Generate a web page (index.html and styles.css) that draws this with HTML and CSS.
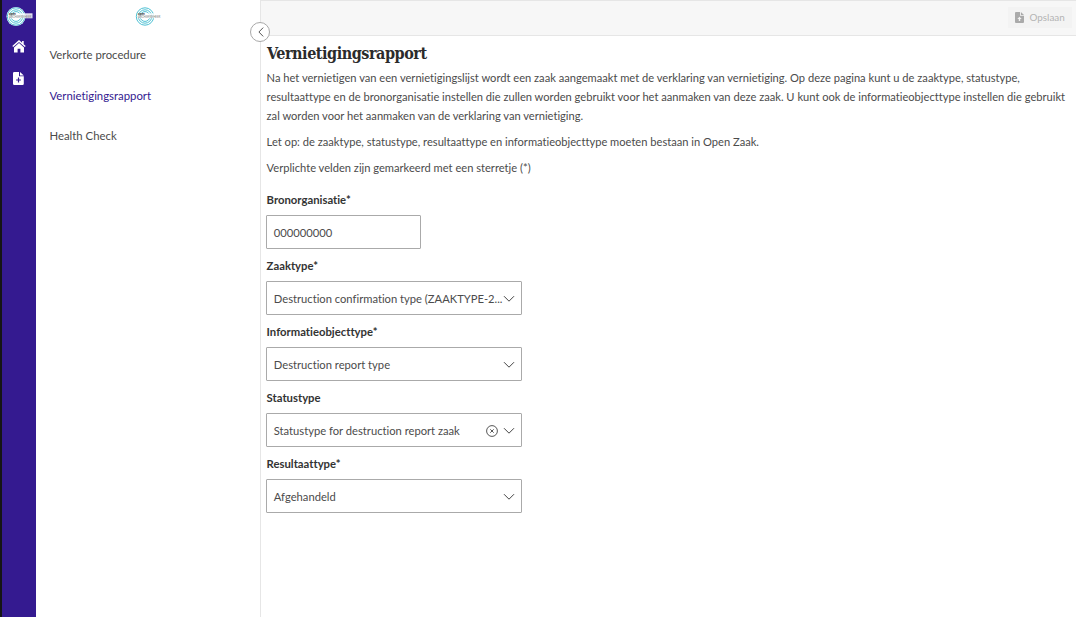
FILE: index.html
```html
<!DOCTYPE html>
<html lang="nl">
<head>
<meta charset="utf-8">
<title>Vernietigingsrapport</title>
<link rel="stylesheet" href="styles.css">
</head>
<body>
<svg class="defs" width="0" height="0">
  <symbol id="rings" viewBox="0 0 27 19">
    <circle class="logo-disc" cx="10" cy="9.5" r="9.5"/>
    <g class="logo-rings"><circle cx="10" cy="9.5" r="8.7"/><circle cx="10" cy="9.5" r="6.7"/><circle cx="10" cy="9.5" r="4.9"/></g>
    <rect class="logo-band" x="3" y="6.3" width="23.5" height="5"/>
  </symbol>
  <symbol id="chevron" viewBox="0 0 12 8"><path d="M1 1.2 6 6.2 11 1.2"/></symbol>
</svg>
<div class="app">
  <nav class="rail">
    <svg class="logo" viewBox="0 0 27 19"><use href="#rings" width="27" height="19"/><text class="logo-open" x="3" y="7.8">open</text><text class="logo-name" x="3" y="11" textLength="22.5">ARCHIEFBEHEER</text></svg>
    <svg class="rail-icon home" viewBox="0 0 14 13"><path d="M7 0 .3 6l.9 1L7 1.9 12.8 7l.9-1L11.7 4.2V1h-1.6v1.7z"/><path d="M7 3.1 2 7.5v5h3.6V8.7h2.8v3.8H12v-5z"/></svg>
    <svg class="rail-icon file" viewBox="0 0 11 13"><path fill-rule="evenodd" d="M1.3 0H6v4.3h4.8v7.5a1.2 1.2 0 0 1-1.2 1.2H1.3A1.3 1.3 0 0 1 0 11.7V1.3A1.3 1.3 0 0 1 1.3 0zM4.9 5.6v1.8H3.1v1.2h1.8v1.8h1.2V8.6h1.8V7.4H6.1V5.6zM7 0l3.8 3.4H7z"/></svg>
  </nav>
  <aside class="sidebar">
    <svg class="logo" viewBox="0 0 27 19"><use href="#rings" width="27" height="19"/><text class="logo-open" x="3" y="7.8">open</text><text class="logo-name" x="3" y="11" textLength="22.5">ARCHIEFBEHEER</text></svg>
    <div class="links"><a>Verkorte procedure</a><a class="active">Vernietigingsrapport</a><a>Health Check</a></div>
    <button class="collapse"><svg viewBox="0 0 6 10"><path d="M5.2.6.9 5l4.3 4.4"/></svg></button>
  </aside>
  <main class="main">
    <header class="toolbar">
      <button class="save"><svg viewBox="0 0 9 11"><path fill-rule="evenodd" d="M1 0h4v3.7h4V10a1 1 0 0 1-1 1H1a1 1 0 0 1-1-1V1a1 1 0 0 1 1-1zM4.5 4.7 2.3 7h1.5v2h1.4V7h1.5zM5.9 0 9 2.9H5.9z"/></svg><span>Opslaan</span></button>
    </header>
    <div class="content">
      <h1>Vernietigingsrapport</h1>
      <p>Na het vernietigen van een vernietigingslijst wordt een zaak aangemaakt met de verklaring van vernietiging. Op deze pagina kunt u de zaaktype, statustype,<br>resultaattype en de bronorganisatie instellen die zullen worden gebruikt voor het aanmaken van deze zaak. U kunt ook de informatieobjecttype instellen die gebruikt<br>zal worden voor het aanmaken van de verklaring van vernietiging.</p>
      <p>Let op: de zaaktype, statustype, resultaattype en informatieobjecttype moeten bestaan in Open Zaak.</p>
      <p>Verplichte velden zijn gemarkeerd met een sterretje (*)</p>
      <form class="form">
        <label>Bronorganisatie*</label>
        <div class="field short"><span>000000000</span></div>
        <label>Zaaktype*</label>
        <div class="field"><span>Destruction confirmation type (ZAAKTYPE-2...</span><svg class="chevron"><use href="#chevron"/></svg></div>
        <label>Informatieobjecttype*</label>
        <div class="field"><span>Destruction report type</span><svg class="chevron"><use href="#chevron"/></svg></div>
        <label>Statustype</label>
        <div class="field"><span>Statustype for destruction report zaak</span><svg class="clear" viewBox="0 0 12 12"><circle cx="6" cy="6" r="5.4"/><path d="m4.3 4.3 3.4 3.4m0-3.4L4.3 7.7"/></svg><svg class="chevron"><use href="#chevron"/></svg></div>
        <label>Resultaattype*</label>
        <div class="field"><span>Afgehandeld</span><svg class="chevron"><use href="#chevron"/></svg></div>
      </form>
    </div>
  </main>
</div>
</body>
</html>
```
FILE: styles.css
```css
* { box-sizing: border-box; }
body { margin: 0; font: 11.3px/19px Lato, sans-serif; font-variant-ligatures: none; color: #4b4b4b; background: #fff; }
svg { display: block; flex: none; }
button { font: inherit; }
.defs { position: absolute; }
.app { display: flex; height: 617px; overflow: hidden; }
.rail { width: 36px; background: #341a90; border-left: 2px solid #151515; display: flex; flex-direction: column; align-items: center; padding-top: 7px; }
.logo { width: 27px; height: 19px; overflow: visible; }
.rail-icon { fill: #fff; }
.home { width: 14px; height: 13px; margin-top: 14px; margin-right: 1px; }
.file { width: 11px; height: 13px; margin-top: 19px; margin-right: 1px; }
.logo-disc { fill: #fff; }
.logo-rings { fill: none; stroke: #45bdd1; stroke-width: .95; }
.logo-band { fill: #fff; opacity: .85; }
.logo-open { font: bold 3px Lato, sans-serif; fill: #222; }
.logo-name { font: 3px Lato, sans-serif; fill: #888; }
.sidebar { position: relative; width: 225px; border-right: 1px solid #e6e6e6; display: flex; flex-direction: column; align-items: center; padding-top: 7px; }
.links { align-self: stretch; display: flex; flex-direction: column; gap: 21.5px; padding: 19px 13.5px; font-size: 11.35px; }
.active { color: #341a90; }
.collapse { position: absolute; right: -10px; top: 22px; width: 20px; height: 20px; padding: 0; border: 1px solid #a8a8a8; border-radius: 50%; background: #fff; display: flex; align-items: center; justify-content: center; }
.collapse svg { width: 6px; height: 10px; margin-left: 1px; fill: none; stroke: #444; stroke-width: .9; }
.main { flex: 1; min-width: 0; }
.toolbar { height: 36px; background: #f7f7f7; border-top: 1px solid #e6e6e6; border-bottom: 1px solid #e6e6e6; display: flex; justify-content: flex-end; padding: 6px 4px 0 0; }
.save { width: 64px; height: 21px; padding: 0 0 0 7px; border: 0; background: #f3f3f3; color: #b3b3b3; display: flex; align-items: center; gap: 5.5px; font-size: 9.9px; }
.save svg { width: 9px; height: 11px; fill: #aaa; }
.content { padding: 6px 0 0 5px; }
h1 { margin: 0 0 2px; padding-left: 1px; font: bold 16px/24px "Roboto Slab", "DejaVu Serif Condensed", "DejaVu Serif", serif; font-stretch: condensed; letter-spacing: -.45px; color: #2b2b2b; }
p { margin: 0 0 7px; padding-left: .6px; white-space: nowrap; font-size: 11.13px; }
.form { padding-top: 6px; }
label { display: block; height: 19px; margin-bottom: 6px; padding-left: .6px; font-weight: bold; color: #333; }
.field { width: 256px; height: 34px; margin-bottom: 7px; border: 1px solid #aaa; border-radius: 1px; display: flex; align-items: center; padding: 1px 6px 0 6.8px; white-space: nowrap; font-size: 11.2px; }
.field.short { width: 155px; }
.field span { flex: 1; min-width: 0; }
.chevron { width: 12px; height: 8px; fill: none; stroke: #444; stroke-width: 1; }
.clear { width: 12px; height: 12px; margin-right: 5px; fill: none; stroke: #444; stroke-width: .9; }
```
